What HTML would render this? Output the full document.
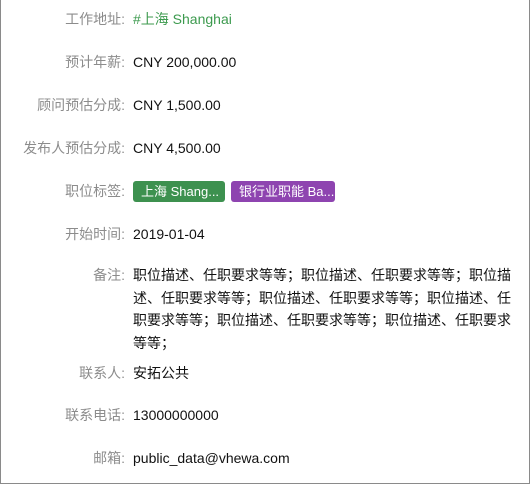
<!DOCTYPE html>
<html><head><meta charset="utf-8"><style>
html,body{margin:0;padding:0;background:#fff;}
body{width:531px;height:486px;position:relative;overflow:hidden;font-family:"Liberation Sans","Noto Sans CJK SC",sans-serif;font-size:14px;}
.frame{position:absolute;left:0;top:-2px;width:528px;height:485px;border:1px solid #8a8a8a;border-top:none;}
.l{position:absolute;right:406px;color:#8c8c8c;white-space:nowrap;line-height:20px;}
.v{position:absolute;left:133px;color:#111;line-height:20px;white-space:nowrap;}
.g{color:#3c9a4e;}
.tag{display:inline-block;color:#fff;font-size:13px;height:21px;line-height:21px;padding:0 8px;border-radius:3px;margin-right:6px;text-align:center;vertical-align:top;}
.note{position:absolute;left:133px;width:384px;line-height:22.7px;color:#111;white-space:normal;word-break:break-all;}
</style></head><body>
<div class="frame"></div>
<div class="l" style="top:9px">工作地址:</div><div class="v g" style="top:9px">#上海 Shanghai</div>
<div class="l" style="top:52px">预计年薪:</div><div class="v" style="top:52px">CNY 200,000.00</div>
<div class="l" style="top:95px">顾问预估分成:</div><div class="v" style="top:95px">CNY 1,500.00</div>
<div class="l" style="top:138px">发布人预估分成:</div><div class="v" style="top:138px">CNY 4,500.00</div>
<div class="l" style="top:181px">职位标签:</div><div class="v" style="top:181px;line-height:21px"><span class="tag" style="background:#3d914f;width:76px;">上海 Shang...</span><span class="tag" style="background:#8e44b0;width:88px;">银行业职能 Ba...</span></div>
<div class="l" style="top:224px">开始时间:</div><div class="v" style="top:224px">2019-01-04</div>
<div class="l" style="top:265px">备注:</div>
<div class="note" style="top:264px">职位描述、任职要求等等；职位描述、任职要求等等；职位描述、任职要求等等；职位描述、任职要求等等；职位描述、任职要求等等；职位描述、任职要求等等；职位描述、任职要求等等；</div>
<div class="l" style="top:363px">联系人:</div><div class="v" style="top:363px">安拓公共</div>
<div class="l" style="top:405px">联系电话:</div><div class="v" style="top:405px">13000000000</div>
<div class="l" style="top:448px">邮箱:</div><div class="v" style="top:448px">public_data@vhewa.com</div>
</body></html>
